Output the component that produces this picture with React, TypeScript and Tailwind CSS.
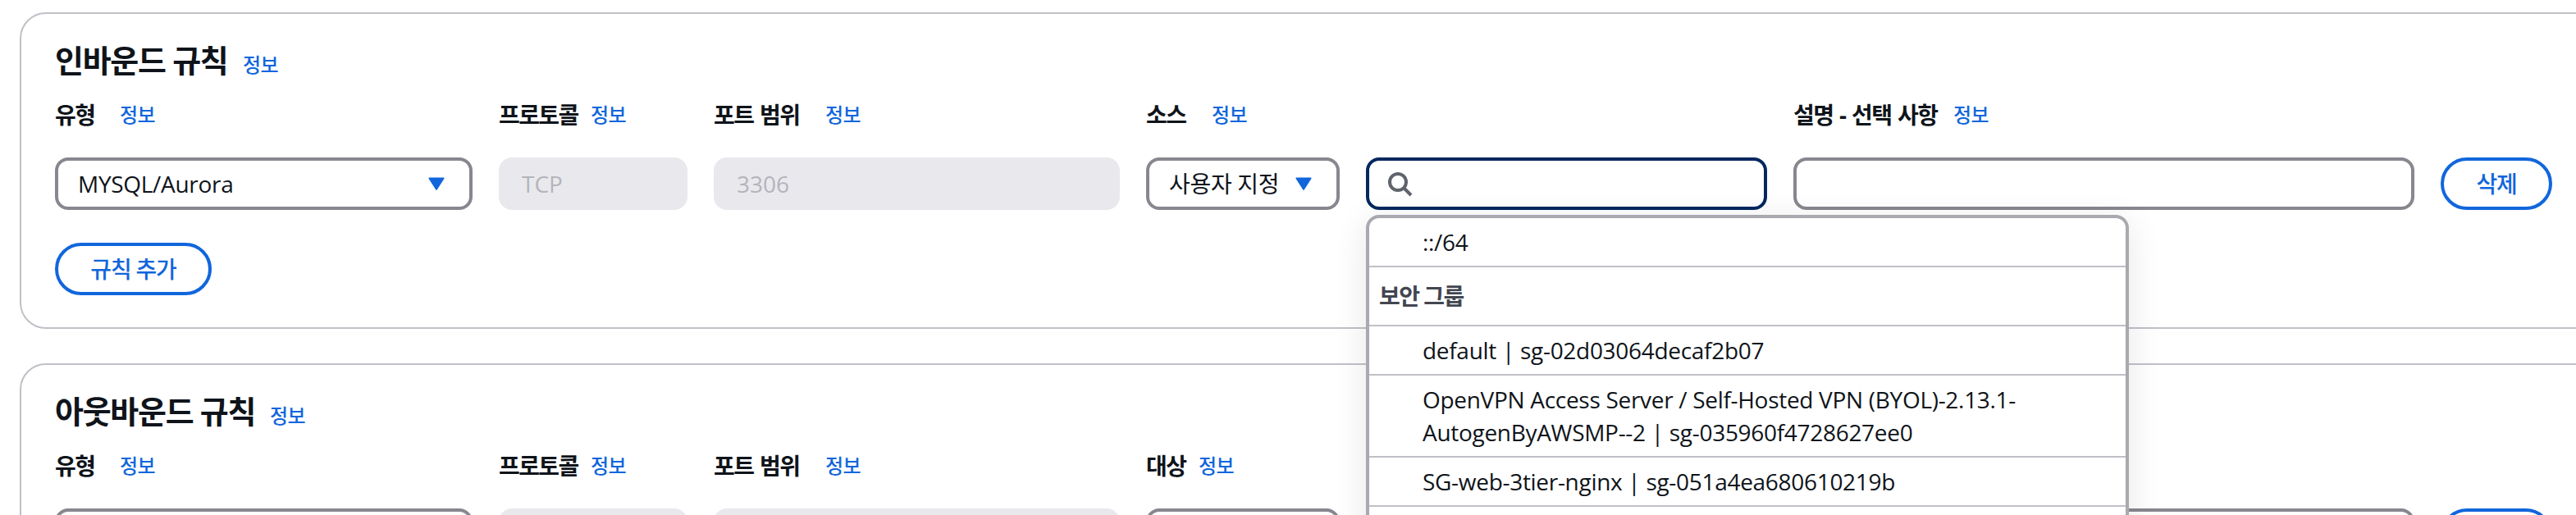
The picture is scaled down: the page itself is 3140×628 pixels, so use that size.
const FONT = "font-['Open_Sans','Noto_Sans_CJK_KR',sans-serif]"

// one grid for the label row and the field row so columns line up
const RULE_GRID = 'grid grid-cols-[509px_230px_495px_236px_489px_757px_136px] gap-x-[32px]'

const securityGroups = [
  'default | sg-02d03064decaf2b07',
  'OpenVPN Access Server / Self-Hosted VPN (BYOL)-2.13.1-AutogenByAWSMP--2 | sg-035960f4728627ee0',
  'SG-web-3tier-nginx | sg-051a4ea680610219b',
]

function Info() {
  return <a className="text-[24px] leading-[40px] font-medium tracking-[-0.6px] text-[#1166dc]">정보</a>
}

function FieldLabel({ text, widthClass }: { text: string; widthClass: string }) {
  return (
    <div className="flex h-[40px] items-center">
      <span className={`${widthClass} text-[28px] leading-[40px] font-bold tracking-[-1.6px] whitespace-nowrap text-[#0f141a] [word-spacing:2px]`}>
        {text}
      </span>
      <Info />
    </div>
  )
}

function Caret() {
  return (
    <svg width="20" height="16" viewBox="0 0 20 16" className="shrink-0">
      <path d="M1.5 0.5h17a1 1 0 0 1 .85 1.5l-8.5 13.2a1 1 0 0 1-1.7 0L0.65 2a1 1 0 0 1 .85-1.5z" fill="#1166dc" />
    </svg>
  )
}

function SelectBox({ value }: { value: string }) {
  return (
    <div className="flex h-[64px] items-center justify-between rounded-[16px] border-4 border-[#87878f] bg-white pr-[30px] pl-[24px]">
      <span className="text-[28px] leading-[40px] tracking-[-0.3px] whitespace-nowrap text-[#0f141a]">{value}</span>
      <Caret />
    </div>
  )
}

function DisabledBox({ value }: { value: string }) {
  return (
    <div className="flex h-[64px] items-center rounded-[16px] bg-[#e9e9ed] px-[28px] text-[28px] leading-[40px] text-[#b4b4bb]">
      {value}
    </div>
  )
}

function PillButton({ label, className }: { label: string; className?: string }) {
  return (
    <button className={`h-[64px] rounded-[32px] border-4 border-[#1166dc] bg-white text-[28px] leading-[40px] font-medium tracking-[-1.2px] text-[#1166dc] ${className ?? ''}`}>
      {label}
    </button>
  )
}

function SearchDropdown() {
  return (
    <div className="absolute top-[calc(100%+6px)] left-0 z-10 h-[500px] w-[930px] rounded-[16px] border-4 border-[#a9a9b0] bg-white text-[28px] leading-[40px] tracking-[-0.3px] text-[#0f141a] shadow-[0_8px_40px_2px_rgba(0,7,22,0.09)]">
      <div className="border-b-2 border-[#c0c0c7] py-[9px] pl-[65px]">::/64</div>
      <div className="border-b-2 border-[#c0c0c7] py-[15px] pl-[12px] font-bold tracking-[-1.5px] text-[#424650]">보안 그룹</div>
      {securityGroups.map(group => (
        <div key={group} className="border-b-2 border-[#c0c0c7] py-[9px] pr-[100px] pl-[65px]">
          {group}
        </div>
      ))}
    </div>
  )
}

function SearchBox() {
  return (
    <div className="relative">
      <div className="flex h-[64px] items-center rounded-[16px] border-4 border-[#04275f] bg-white pl-[21px]">
        <svg width="32" height="32" viewBox="0 0 32 32" fill="none" stroke="#5f636c" strokeWidth="4">
          <circle cx="14" cy="14" r="10" />
          <path d="M21.5 21.5 30 30" />
        </svg>
      </div>
      <SearchDropdown />
    </div>
  )
}

function RuleCard({ title, peerLabel, peerWidth, titleWidth, open }: {
  title: string
  peerLabel: string
  peerWidth: string
  titleWidth: string
  open?: boolean
}) {
  return (
    <section className="w-[3300px] rounded-[32px] border-2 border-[#c0c0c7] bg-white pt-[34px] pr-[40px] pb-[39px] pl-[41px]">
      <div className="mb-[25px] flex h-[44px] items-baseline">
        <h2 className={`${titleWidth} text-[38px] leading-[44px] font-bold tracking-[-1.3px] whitespace-nowrap text-[#0f141a]`}>{title}</h2>
        <Info />
      </div>

      <div className={`${RULE_GRID} mb-[32px]`}>
        <FieldLabel text="유형" widthClass="w-[79px]" />
        <FieldLabel text="프로토콜" widthClass="w-[112px]" />
        <FieldLabel text="포트 범위" widthClass="w-[136px]" />
        <FieldLabel text={peerLabel} widthClass={peerWidth} />
        <div />
        <FieldLabel text="설명 - 선택 사항" widthClass="w-[195px]" />
        <div />
      </div>

      <div className={RULE_GRID}>
        <SelectBox value="MYSQL/Aurora" />
        <DisabledBox value="TCP" />
        <DisabledBox value="3306" />
        <SelectBox value="사용자 지정" />
        {open ? <SearchBox /> : <div className="h-[64px] rounded-[16px] border-4 border-[#87878f]" />}
        <div className="h-[64px] rounded-[16px] border-4 border-[#87878f] bg-white" />
        <PillButton label="삭제" />
      </div>

      <PillButton label="규칙 추가" className="mt-[40px] w-[191px]" />
    </section>
  )
}

export default function App() {
  return (
    <div className={`${FONT} flex h-[628px] w-[3140px] flex-col gap-[42px] overflow-hidden bg-white pt-[15px] pl-[24px]`}>
      <RuleCard title="인바운드 규칙" titleWidth="w-[229px]" peerLabel="소스" peerWidth="w-[80px]" open />
      <RuleCard title="아웃바운드 규칙" titleWidth="w-[262px]" peerLabel="대상" peerWidth="w-[64px]" />
    </div>
  )
}
